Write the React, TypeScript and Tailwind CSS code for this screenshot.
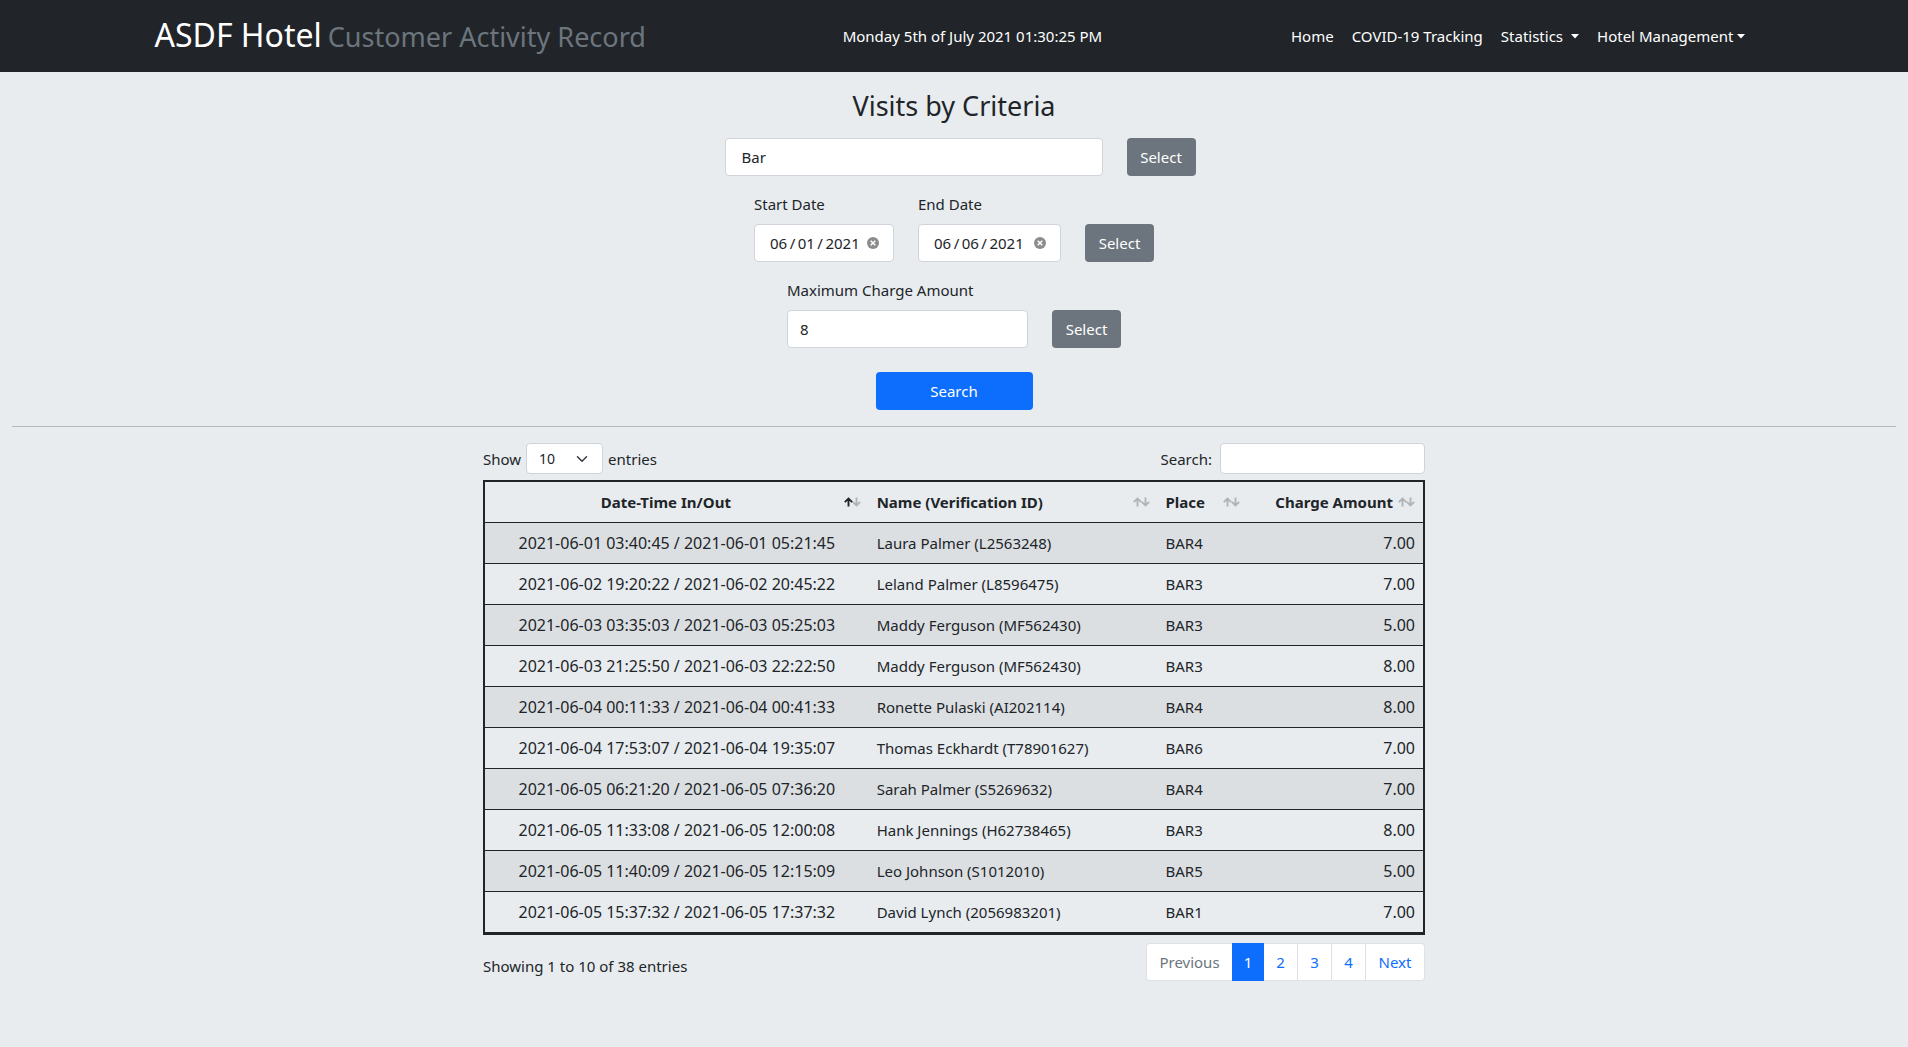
import type { ReactNode } from "react";

type Visit = { time: string; name: string; place: string; charge: string };

const visits: Visit[] = [
  { time: "2021-06-01 03:40:45 / 2021-06-01 05:21:45", name: "Laura Palmer (L2563248)", place: "BAR4", charge: "7.00" },
  { time: "2021-06-02 19:20:22 / 2021-06-02 20:45:22", name: "Leland Palmer (L8596475)", place: "BAR3", charge: "7.00" },
  { time: "2021-06-03 03:35:03 / 2021-06-03 05:25:03", name: "Maddy Ferguson (MF562430)", place: "BAR3", charge: "5.00" },
  { time: "2021-06-03 21:25:50 / 2021-06-03 22:22:50", name: "Maddy Ferguson (MF562430)", place: "BAR3", charge: "8.00" },
  { time: "2021-06-04 00:11:33 / 2021-06-04 00:41:33", name: "Ronette Pulaski (AI202114)", place: "BAR4", charge: "8.00" },
  { time: "2021-06-04 17:53:07 / 2021-06-04 19:35:07", name: "Thomas Eckhardt (T78901627)", place: "BAR6", charge: "7.00" },
  { time: "2021-06-05 06:21:20 / 2021-06-05 07:36:20", name: "Sarah Palmer (S5269632)", place: "BAR4", charge: "7.00" },
  { time: "2021-06-05 11:33:08 / 2021-06-05 12:00:08", name: "Hank Jennings (H62738465)", place: "BAR3", charge: "8.00" },
  { time: "2021-06-05 11:40:09 / 2021-06-05 12:15:09", name: "Leo Johnson (S1012010)", place: "BAR5", charge: "5.00" },
  { time: "2021-06-05 15:37:32 / 2021-06-05 17:37:32", name: "David Lynch (2056983201)", place: "BAR1", charge: "7.00" },
];

function Caret() {
  return (
    <svg viewBox="0 0 8 5" className="h-[5px] w-2 fill-current" aria-hidden="true">
      <path d="M0 0h8L4 4.6z" />
    </svg>
  );
}

function SortIcon({ ascending = false }: { ascending?: boolean }) {
  return (
    <svg
      viewBox="0 0 17 10"
      className="absolute top-[15px] right-2 h-[10px] w-[17px]"
      fill="none"
      strokeWidth="1.9"
      aria-hidden="true"
    >
      <path d="M12.5 .5v7.5M8.8 4.9l3.7 3.5 3.7-3.5" className="stroke-[#b0b4b7]" />
      <path d="M4.5 9.5V1.8M.8 5.1l3.7-3.5 3.7 3.5" className={ascending ? "stroke-[#212529]" : "stroke-[#b0b4b7]"} />
    </svg>
  );
}

function HeaderCell({ children, className, ascending }: { children: ReactNode; className: string; ascending?: boolean }) {
  return (
    <th
      scope="col"
      aria-sort={ascending ? "ascending" : "none"}
      className={"relative h-10 cursor-pointer py-2 pr-[30px] pl-2 font-bold whitespace-nowrap " + className}
    >
      {children}
      <SortIcon ascending={ascending} />
    </th>
  );
}

function SelectButton() {
  return (
    <button type="button" className="h-[38px] w-[69px] rounded bg-[#6c757d] text-center text-white">
      Select
    </button>
  );
}

function DateField({ id, label, value, width }: { id: string; label: string; value: string; width: string }) {
  return (
    <div className={"flex flex-col gap-2 " + width}>
      <label htmlFor={id}>{label}</label>
      <div className="flex h-[38px] items-center justify-between rounded border border-[#ced4da] bg-white pr-[14px] pl-[15px]">
        <input id={id} type="text" defaultValue={value} className="w-24 bg-transparent outline-none" />
        <button type="button" aria-label={"Clear " + label}>
          <svg viewBox="0 0 12 12" className="size-3" aria-hidden="true">
            <circle cx="6" cy="6" r="6" fill="#8c8c8c" />
            <path d="M3.7 3.7l4.6 4.6M8.3 3.7L3.7 8.3" stroke="#fff" strokeWidth="1.5" />
          </svg>
        </button>
      </div>
    </div>
  );
}

const pageLink =
  "flex h-[38px] w-[34px] items-center justify-center border-y border-r border-[#dee2e6] bg-white text-[#0d6efd]";

export default function App() {
  return (
    <div className="min-h-screen bg-[#e8ecef] font-['Noto_Sans',sans-serif] text-[15px] leading-6 text-[#212529]">
      <header className="flex h-[72px] items-center justify-between bg-[#212529] px-[8.1%] text-white">
        <a href="#" className="mr-4 flex items-baseline gap-1.5 text-[32px] leading-10 whitespace-nowrap">
          ASDF Hotel
          <small className="text-[27px] text-[#6c757d]">Customer Activity Record</small>
        </a>
        <p className="whitespace-nowrap">Monday 5th of July 2021 01:30:25 PM</p>
        <nav className="flex gap-0.5 whitespace-nowrap">
          <a href="#" className="px-2">Home</a>
          <a href="#" className="px-2">COVID-19 Tracking</a>
          <a href="#" className="flex items-center gap-2 px-2">
            Statistics <Caret />
          </a>
          <a href="#" className="flex items-center gap-1 px-2">
            Hotel Management <Caret />
          </a>
        </nav>
      </header>

      <main className="px-3 pt-4">
        <form className="flex flex-col items-center" onSubmit={(e) => e.preventDefault()}>
          <h1 className="mb-3.5 text-[27px] leading-9">Visits by Criteria</h1>

          <div className="mb-4 flex gap-6 pl-3">
            <input
              type="text"
              aria-label="Service"
              defaultValue="Bar"
              className="h-[38px] w-[378px] rounded border border-[#ced4da] bg-white px-4 outline-none"
            />
            <SelectButton />
          </div>

          <div className="mb-4 flex items-end gap-6">
            <DateField id="start" label="Start Date" value={"06\u2009/\u200901\u2009/\u20092021"} width="w-[140px]" />
            <DateField id="end" label="End Date" value={"06\u2009/\u200906\u2009/\u20092021"} width="w-[143px]" />
            <SelectButton />
          </div>

          <div className="mb-6 flex items-end gap-6">
            <div className="flex flex-col gap-2">
              <label htmlFor="max-charge">Maximum Charge Amount</label>
              <input
                id="max-charge"
                type="text"
                inputMode="numeric"
                defaultValue="8"
                className="h-[38px] w-[241px] rounded border border-[#ced4da] bg-white px-3 outline-none"
              />
            </div>
            <SelectButton />
          </div>

          <button type="submit" className="h-[38px] w-[157px] rounded bg-[#0d6efd] text-white">
            Search
          </button>
        </form>

        <hr className="my-4 border-[#b6babd]" />

        <section className="mx-auto w-1/2">
          <div className="mb-1.5 flex items-center justify-between">
            <div className="flex items-center gap-[5px]">
              <label htmlFor="page-size">Show</label>
              <div className="relative">
                <select
                  id="page-size"
                  defaultValue="10"
                  className="block h-[31px] w-[77px] appearance-none rounded border border-[#ced4da] bg-white pl-3 text-sm outline-none"
                >
                  <option>10</option>
                  <option>25</option>
                  <option>50</option>
                  <option>100</option>
                </select>
                <svg
                  viewBox="0 0 16 16"
                  className="pointer-events-none absolute top-2 right-[15px] h-4 w-3"
                  fill="none"
                  stroke="#343a40"
                  strokeWidth="2"
                  strokeLinecap="round"
                  strokeLinejoin="round"
                  aria-hidden="true"
                >
                  <path d="M2 5l6 6 6-6" />
                </svg>
              </div>
              <span>entries</span>
            </div>
            <label className="flex items-center gap-2">
              Search:
              <input
                type="search"
                className="h-[31px] w-[205px] rounded border border-[#ced4da] bg-white px-2 text-sm outline-none"
              />
            </label>
          </div>

          <div className="border-2 border-[#212529]">
            <table className="w-full table-fixed border-collapse">
              <colgroup>
                <col className="w-[40.9%]" />
                <col className="w-[30.8%]" />
                <col className="w-[9.6%]" />
                <col className="w-[18.7%]" />
              </colgroup>
              <thead>
                <tr className="border-b border-[#212529]">
                  <HeaderCell className="text-center" ascending>Date-Time In/Out</HeaderCell>
                  <HeaderCell className="text-left">Name (Verification ID)</HeaderCell>
                  <HeaderCell className="text-left">Place</HeaderCell>
                  <HeaderCell className="text-right">Charge Amount</HeaderCell>
                </tr>
              </thead>
              <tbody>
                {visits.map((visit) => (
                  <tr key={visit.time} className="h-[41px] border-b border-[#212529] odd:bg-[#dcdfe2]">
                    <td className="px-2 text-center text-base">{visit.time}</td>
                    <td className="px-2">{visit.name}</td>
                    <td className="px-2">{visit.place}</td>
                    <td className="px-2 text-right text-base">{visit.charge}</td>
                  </tr>
                ))}
              </tbody>
            </table>
          </div>

          <div className="mt-2 flex items-center justify-between">
            <p className="mt-2">Showing 1 to 10 of 38 entries</p>
            <nav aria-label="Pages" className="flex">
              <button
                type="button"
                disabled
                className="h-[38px] w-[86px] rounded-l border-y border-l border-[#dee2e6] bg-white text-[#6c757d]"
              >
                Previous
              </button>
              <a href="#" aria-current="page" className="flex h-[38px] w-8 items-center justify-center bg-[#0d6efd] text-white">
                1
              </a>
              <a href="#" className={pageLink}>2</a>
              <a href="#" className={pageLink}>3</a>
              <a href="#" className={pageLink}>4</a>
              <a
                href="#"
                className="flex h-[38px] w-[59px] items-center justify-center rounded-r border-y border-r border-[#dee2e6] bg-white text-[#0d6efd]"
              >
                Next
              </a>
            </nav>
          </div>
        </section>
      </main>
    </div>
  );
}
